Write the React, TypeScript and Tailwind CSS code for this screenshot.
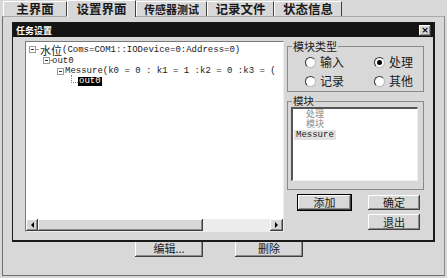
import React from "react";

const cjk = "font-['Noto_Sans_CJK_SC',sans-serif]";
const mono = "font-['Liberation_Mono','Noto_Sans_CJK_SC',monospace]";
const raised =
  "shadow-[inset_-1px_-1px_0_#404040,inset_1px_1px_0_#ffffff,inset_-2px_-2px_0_#8a8a8a]";

function Tab({ label, w, active, small }: { label: string; w: number; active?: boolean; small?: boolean }) {
  return (
    <div
      style={{ width: w }}
      className={`flex items-center justify-center border-l border-t border-r border-l-white border-t-white border-r-[#404040] ${
        active ? "h-[17px] -mb-px bg-[#d8d8d8] relative z-10" : "h-[15px]"
      }`}
    >
      <span className={`${cjk} font-bold text-[#1a1a1a] leading-none ${small ? "text-[11px]" : "text-[12.5px]"}`}>
        {label}
      </span>
    </div>
  );
}

function Expander() {
  return (
    <span className="w-[7px] h-[7px] border border-[#9a9a9a] bg-white flex items-center justify-center shrink-0">
      <span className="w-[3px] h-px bg-[#333]" />
    </span>
  );
}

function Radio({ label, on }: { label: string; on?: boolean }) {
  return (
    <div className="flex items-center h-[12px]">
      <span className="w-[11px] h-[11px] rounded-full bg-white border border-[#333] border-r-[#bbb] border-b-[#bbb] flex items-center justify-center">
        {on && <span className="w-[5px] h-[5px] rounded-full bg-black" />}
      </span>
      <span className={`${cjk} text-[12px] leading-[12px] ml-[4px] text-[#1a1a1a]`}>{label}</span>
    </div>
  );
}

function Btn({ label, w, h, def }: { label: string; w: number; h: number; def?: boolean }) {
  return (
    <div
      style={{ width: w, height: h }}
      className={`flex items-center justify-center bg-[#d8d8d8] ${raised} ${def ? "outline outline-1 outline-black" : ""}`}
    >
      <span className={`${cjk} text-[11px] leading-none text-[#1a1a1a]`}>{label}</span>
    </div>
  );
}

export default function App() {
  return (
    <div className="relative w-[447px] h-[278px] bg-[#d8d8d8] overflow-hidden">
      {/* tab strip */}
      <div className="h-[16px] flex items-end pl-[3px]">
        <Tab label="主界面" w={64} />
        <Tab label="设置界面" w={69} active />
        <Tab label="传感器测试" w={71} small />
        <Tab label="记录文件" w={67} />
        <Tab label="状态信息" w={68} />
      </div>

      {/* tab panel */}
      <div className="ml-[2px] w-[443px] h-[260px] border-t border-l border-t-[#a8a8a8] border-l-[#6e6e6e] border-r border-b border-r-[#8a8a8a] border-b-[#6e6e6e]">
        <div className="flex mt-[219px]">
          <div className={`ml-[132px] w-[68px] h-[21px] flex items-end justify-center pb-[3px] ${raised}`}>
            <span className={`${cjk} text-[11px] leading-none text-[#1a1a1a]`}>编辑...</span>
          </div>
          <div className={`ml-[32px] w-[68px] h-[21px] flex items-end justify-center pb-[3px] ${raised}`}>
            <span className={`${cjk} text-[11px] leading-none text-[#1a1a1a]`}>删除</span>
          </div>
        </div>
      </div>

      {/* dialog window */}
      <div className="absolute left-[12px] top-[22px] w-[423px] h-[220px] bg-[#d8d8d8] border-l border-t border-r-2 border-b-2 border-[#1a1a1a] flex flex-col">
        <div className="h-[14px] bg-[#141414] flex items-center justify-between pl-[3px] pr-[2px]">
          <span className={`${cjk} text-[9px] font-bold text-white leading-none`}>任务设置</span>
          <div className={`w-[12px] h-[11px] bg-[#d8d8d8] flex items-center justify-center ${raised}`}>
            <span className="font-['DejaVu_Sans',sans-serif] text-[9px] font-bold leading-none text-black">×</span>
          </div>
        </div>

        <div className="flex pt-[4px] pl-[12px]">
          {/* tree view */}
          <div className="w-[259px] h-[191px] bg-white border border-[#7a7a7a] border-r-[#ededed] border-b-[#ededed] flex flex-col">
            <div className={`flex-1 overflow-hidden pt-[1.5px] ${mono} text-[9px] text-[#1a1a1a]`}>
              <div className="h-[12px] flex items-center pl-[3px] whitespace-nowrap">
                <Expander />
                <span className="w-[2px] border-t border-dotted border-[#999]" />
                <span className={`${cjk} text-[11px] leading-[12px] ml-[2px]`}>水位</span>
                <span className="leading-[10px]">(Coms=COM1::IODevice=0:Address=0)</span>
              </div>
              <div className="h-[10.5px] flex items-center pl-[17px] whitespace-nowrap">
                <Expander />
                <span className="w-[2px] border-t border-dotted border-[#999]" />
                <span className="leading-[10px]">out0</span>
              </div>
              <div className="h-[10px] flex items-center pl-[31px] whitespace-nowrap">
                <Expander />
                <span className="leading-[10px] ml-[1px]">Messure(k0 = 0 : k1 = 1 :k2 = 0 :k3 = (</span>
              </div>
              <div className="h-[10px] flex items-center pl-[45px] whitespace-nowrap">
                <span className="w-[7px] h-[8px] -mt-[4px] border-l border-b border-dotted border-[#888]" />
                <span className="leading-[9px] bg-black text-white px-[1px]">out0</span>
              </div>
            </div>
            {/* horizontal scrollbar */}
            <div className="h-[12px] flex">
              <div className={`w-[12px] bg-[#d8d8d8] flex items-center justify-center ${raised}`}>
                <span className="w-0 h-0 border-y-[3px] border-y-transparent border-r-[3px] border-r-black" />
              </div>
              <div className={`w-[165px] bg-[#d8d8d8] ${raised}`} />
              <div className="flex-1 bg-[#ececec]" />
              <div className={`w-[13px] bg-[#d8d8d8] flex items-center justify-center ${raised}`}>
                <span className="w-0 h-0 border-y-[3px] border-y-transparent border-l-[3px] border-l-black" />
              </div>
            </div>
          </div>

          {/* right column */}
          <div className="ml-[3px] w-[137px] flex flex-col">
            <fieldset className="h-[51px] border border-[#8a8a8a]">
              <legend className={`${cjk} ml-[4px] px-[1px] text-[11px] leading-[11px] text-[#1a1a1a]`}>模块类型</legend>
              <div className="grid grid-cols-[69px_1fr] gap-y-[7px] pl-[17px] mt-[4px]">
                <Radio label="输入" />
                <Radio label="处理" on />
                <Radio label="记录" />
                <Radio label="其他" />
              </div>
            </fieldset>

            <fieldset className="mt-[4px] h-[94px] border border-[#8a8a8a]">
              <legend className={`${cjk} ml-[4px] px-[1px] text-[10.5px] leading-[10px] text-[#1a1a1a]`}>模块</legend>
              <div className="mt-[1px] ml-[3px] w-[127px] h-[74px] bg-white border-t-2 border-l-2 border-t-[#555] border-l-[#555] border-r border-b border-r-[#eee] border-b-[#eee]">
                <div className={`${cjk} pl-[13px] text-[9px] leading-[10px] text-[#8a8a8a]`}>
                  处理
                  <br />
                  模块
                </div>
                <div className="ml-[1px] mt-[1px] flex">
                  <span className={`${mono} text-[9px] leading-[10px] bg-[#e2e2e2] px-[2px] text-[#1a1a1a]`}>Messure</span>
                </div>
              </div>
            </fieldset>

            <div className="flex mt-[5px]">
              <div className="ml-[11px]">
                <Btn label="添加" w={53} h={15} def />
              </div>
              <div className="ml-[17px]">
                <Btn label="确定" w={52} h={15} />
              </div>
            </div>
            <div className="flex mt-[4px] ml-[81px]">
              <Btn label="退出" w={52} h={16} />
            </div>
          </div>
        </div>
      </div>
    </div>
  );
}
